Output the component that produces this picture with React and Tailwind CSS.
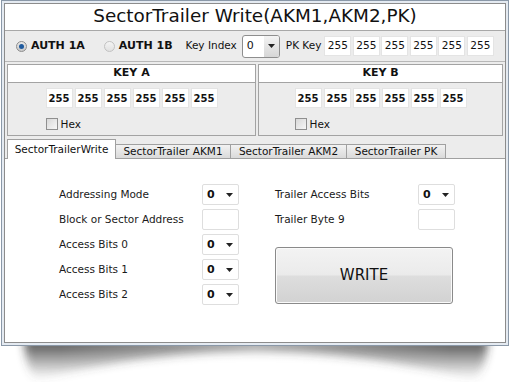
import React from "react";

const font = { fontFamily: '"DejaVu Sans", Verdana, sans-serif' };

function KeyBox({ bold = true }) {
  return (
    <div
      className={`w-[27px] h-[20px] bg-white border border-[#e4e4e4] flex items-center justify-center text-[#111] ${bold ? "font-bold text-[10px]" : "text-[10.5px]"}`}
    >
      255
    </div>
  );
}

function Checkbox() {
  return (
    <div className="w-[12px] h-[12px] border border-[#8f8f8f] bg-gradient-to-br from-[#d8d8d8] to-[#f7f7f7]" />
  );
}

function KeyPanel({ title, className }) {
  return (
    <div className={`h-[72px] border border-[#a3a3a3] bg-[#ececec] flex flex-col ${className}`}>
      <div className="h-[18px] bg-white border-b border-[#a3a3a3] flex items-center justify-center text-[11px] font-bold text-[#111]">
        {title}
      </div>
      <div className="flex justify-center pt-[5px]">
        <div className="flex flex-col">
          <div className="flex gap-[2px]">
            <KeyBox />
            <KeyBox />
            <KeyBox />
            <KeyBox />
            <KeyBox />
            <KeyBox />
          </div>
          <div className="flex items-center gap-[3px] mt-[10px]">
            <Checkbox />
            <span className="text-[10.5px] text-[#111] leading-none">Hex</span>
          </div>
        </div>
      </div>
    </div>
  );
}

function Arrow() {
  return (
    <svg width="7" height="4" viewBox="0 0 7 4" className="block">
      <path d="M0 0 H7 L3.5 4 Z" fill="#222" />
    </svg>
  );
}

function Drop() {
  return (
    <div className="w-[37px] h-[21px] bg-white border border-[#dedede] rounded-[2px] flex items-center justify-between pl-[4px] pr-[5px]">
      <span className="text-[11px] font-bold text-[#111] leading-none">0</span>
      <Arrow />
    </div>
  );
}

function EmptyBox() {
  return <div className="w-[37px] h-[21px] bg-white border border-[#dedede] rounded-[2px]" />;
}

function Row({ label, children }) {
  return (
    <div className="h-[21px] flex items-center">
      <div className="w-[143px] text-[10.5px] text-[#1a1a1a]">{label}</div>
      {children}
    </div>
  );
}

export default function App() {
  return (
    <div className="w-[511px] h-[382px] bg-white overflow-hidden" style={font}>
      <div className="ml-[1px] w-[508px] border border-[#8a98a8] p-[2px] bg-[#e4eaf1]">
        <div className="border border-[#8c8c8c] bg-[#ececec] flex flex-col">
          {/* title */}
          <div className="h-[27px] bg-white border-b border-[#a8a8a8] flex items-center justify-center text-[18.4px] text-[#111] leading-none pb-[1px]">
            SectorTrailer Write(AKM1,AKM2,PK)
          </div>
          {/* auth row */}
          <div className="h-[31px] border-b border-[#b8b8b8] flex items-center pl-[11px] text-[10.5px] text-[#111]">
            <div className="w-[11px] h-[11px] rounded-full border border-[#8d8d8d] bg-gradient-to-b from-[#e8e8e8] to-[#c9c9c9] flex items-center justify-center">
              <div className="w-[5px] h-[5px] rounded-full bg-[#1e5a9e]" />
            </div>
            <span className="ml-[4px] font-bold text-[11px]">AUTH 1A</span>
            <div className="ml-[19px] w-[11px] h-[11px] rounded-full border border-[#c2c2c2] bg-gradient-to-b from-[#f4f4f4] to-[#e1e1e1]" />
            <span className="ml-[4px] font-bold text-[11px]">AUTH 1B</span>
            <span className="ml-[13px]">Key Index</span>
            <div className="ml-[5px] w-[38px] h-[23px] border border-[#8e8e8e] rounded-[3px] bg-white flex overflow-hidden">
              <div className="flex-1 flex items-center pl-[4px] text-[11px]">0</div>
              <div className="w-[15px] bg-gradient-to-b from-[#f3f3f3] to-[#d6d6d6] flex items-center justify-center">
                <Arrow />
              </div>
            </div>
            <span className="ml-[6px]">PK Key</span>
            <div className="ml-[3px] flex gap-[1.5px]">
              <KeyBox bold={false} />
              <KeyBox bold={false} />
              <KeyBox bold={false} />
              <KeyBox bold={false} />
              <KeyBox bold={false} />
              <KeyBox bold={false} />
            </div>
          </div>
          {/* keys */}
          <div className="flex px-[2px] pt-[2px] gap-[2px]">
            <KeyPanel title="KEY A" className="w-[249px]" />
            <KeyPanel title="KEY B" className="w-[245px]" />
          </div>
          {/* tabs */}
          <div className="h-[21px] flex items-end pl-[2px] mt-[1px]">
            <div className="h-[20px] w-[109px] bg-white border border-b-0 border-[#a0a0a0] text-[10.5px] text-[#111] flex items-start justify-center pt-[2px] -mb-px relative z-10">
              SectorTrailerWrite
            </div>
            <div className="h-[14px] w-[115px] bg-gradient-to-b from-[#f2f2f2] to-[#dadada] border border-b-0 border-l-0 border-[#a0a0a0] text-[10.5px] text-[#111] flex items-center justify-center">
              SectorTrailer AKM1
            </div>
            <div className="h-[14px] w-[116px] bg-gradient-to-b from-[#f2f2f2] to-[#dadada] border border-b-0 border-l-0 border-[#a0a0a0] text-[10.5px] text-[#111] flex items-center justify-center">
              SectorTrailer AKM2
            </div>
            <div className="h-[14px] w-[99px] bg-gradient-to-b from-[#f2f2f2] to-[#dadada] border border-b-0 border-l-0 border-[#a0a0a0] text-[10.5px] text-[#111] flex items-center justify-center">
              SectorTrailer PK
            </div>
          </div>
          {/* content */}
          <div className="h-[184px] bg-white border-t border-[#a0a0a0] flex pl-[54px] pt-[25px]">
            <div className="flex flex-col gap-[4px]">
              <Row label="Addressing Mode"><Drop /></Row>
              <Row label="Block or Sector Address"><EmptyBox /></Row>
              <Row label="Access Bits 0"><Drop /></Row>
              <Row label="Access Bits 1"><Drop /></Row>
              <Row label="Access Bits 2"><Drop /></Row>
            </div>
            <div className="ml-[36px] flex flex-col gap-[4px]">
              <Row label="Trailer Access Bits"><Drop /></Row>
              <Row label="Trailer Byte 9"><EmptyBox /></Row>
              <button className="mt-[13px] w-[178px] h-[57px] rounded-[3px] border border-[#8a8a8a] bg-[linear-gradient(to_bottom,#f3f3f3_0%,#ebebeb_48%,#dddddd_52%,#d2d2d2_100%)] shadow-[inset_0_0_0_1px_#fafafa] text-[15px] text-[#111] flex items-center justify-center">
                WRITE
              </button>
            </div>
          </div>
        </div>
      </div>
      {/* curved shadow */}
      <svg width="511" height="40" viewBox="0 0 511 40" className="block">
        <defs>
          <filter id="b" x="-10%" y="-50%" width="120%" height="200%">
            <feGaussianBlur stdDeviation="4" />
          </filter>
          <linearGradient id="g" x1="0" y1="0" x2="0" y2="1">
            <stop offset="0" stopColor="#222" stopOpacity="0.85" />
            <stop offset="0.6" stopColor="#444" stopOpacity="0.35" />
            <stop offset="1" stopColor="#666" stopOpacity="0" />
          </linearGradient>
          <linearGradient id="h" x1="0" y1="0" x2="1" y2="0">
            <stop offset="0" stopColor="#fff" stopOpacity="0" />
            <stop offset="0.5" stopColor="#fff" stopOpacity="0.45" />
            <stop offset="1" stopColor="#fff" stopOpacity="0" />
          </linearGradient>
        </defs>
        <path
          d="M24 -6 H488 C487 10 484 24 474 34 C400 14 320 6 256 6 C190 6 110 14 36 34 C28 24 25 10 24 -6 Z"
          fill="url(#g)"
          filter="url(#b)"
        />
        <rect x="60" y="0" width="391" height="40" fill="url(#h)" />
      </svg>
    </div>
  );
}
